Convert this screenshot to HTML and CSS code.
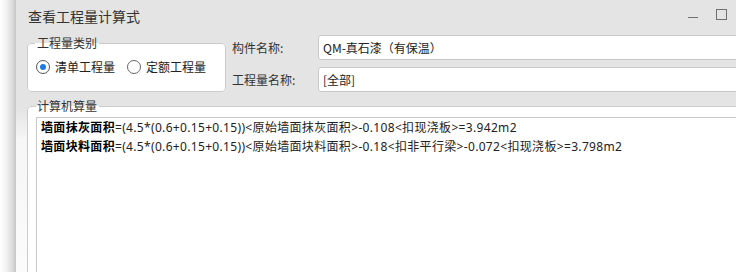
FILE: index.html
```html
<!DOCTYPE html>
<html lang="zh-CN">
<head>
<meta charset="utf-8">
<title>查看工程量计算式</title>
<link rel="stylesheet" href="styles.css">
</head>
<body>
<div class="page">
  <div class="shade"></div>
  <div class="dialog">
    <div class="titlebar">
      <span class="title">查看工程量计算式</span>
      <div class="winbtns">
        <svg class="btn-min" width="12" height="12" viewBox="0 0 12 12"><line x1="1" y1="8.5" x2="11" y2="8.5" stroke="#707070" stroke-width="1"/></svg>
        <svg class="btn-max" width="12" height="12" viewBox="0 0 12 12"><rect x="0.5" y="0.5" width="10" height="10" fill="none" stroke="#707070" stroke-width="1"/></svg>
      </div>
    </div>
    <div class="top">
      <fieldset class="group kind">
        <legend>工程量类别</legend>
        <div class="radios">
          <label class="radio"><span class="dot on"></span>清单工程量</label>
          <label class="radio"><span class="dot"></span>定额工程量</label>
        </div>
      </fieldset>
      <div class="fields">
        <div class="row"><span class="lbl">构件名称:</span><div class="input">QM-真石漆（有保温）</div></div>
        <div class="row"><span class="lbl">工程量名称:</span><div class="input">[全部]</div></div>
      </div>
    </div>
    <fieldset class="group calc">
      <legend>计算机算量</legend>
      <div class="textarea">
        <div class="line"><b>墙面抹灰面积</b>=(4.5*(0.6+0.15+0.15))&lt;原始墙面抹灰面积&gt;-0.108&lt;扣现浇板&gt;=3.942m2</div>
        <div class="line"><b>墙面块料面积</b>=(4.5*(0.6+0.15+0.15))&lt;原始墙面块料面积&gt;-0.18&lt;扣非平行梁&gt;-0.072&lt;扣现浇板&gt;=3.798m2</div>
      </div>
    </fieldset>
  </div>
</div>
</body>
</html>
```

FILE: styles.css
```css
html, body {
  margin: 0;
  padding: 0;
  background: #ffffff;
}
body {
  font-family: "Noto Sans CJK SC", "Noto Sans", sans-serif;
  font-size: 12px;
  color: #222;
  overflow: hidden;
}
.page {
  display: flex;
  width: 736px;
  height: 272px;
  overflow: hidden;
}
.shade {
  flex: 0 0 16px;
  background: linear-gradient(to right, #ffffff 0%, #f2f2f2 40%, #d6d6d6 85%, #c4c4c4 100%);
}
.dialog {
  flex: 0 0 720px;
  background: linear-gradient(to bottom, #e4e4e4 0, #e4e4e4 108px, #f6f6f6 140px, #fbfbfb 100%);
}
.titlebar {
  height: 35px;
  display: flex;
  align-items: center;
  padding-left: 12px;
  background: #e4e4e4;
  box-sizing: border-box;
}
.title {
  font-size: 14px;
  color: #333;
  line-height: 20px;
  margin-top: -4px;
}
.winbtns {
  margin-left: auto;
  margin-right: 8px;
  display: flex;
  gap: 17px;
  align-items: center;
  margin-top: -5px;
}
.top {
  display: flex;
  padding-left: 11px;
}
.group {
  margin: 0;
  border: 1px solid #cbcbcb;
  border-radius: 4px;
  background: #ffffff;
  padding: 0 7px;
}
.group legend {
  padding: 0 2px;
  font-size: 12px;
  line-height: 16px;
  color: #333;
}
.kind {
  flex: 0 0 199px;
  width: 199px;
  height: 57px;
  box-sizing: border-box;
}
.radios {
  display: flex;
  gap: 12px;
  padding-top: 8px;
  padding-left: 1px;
}
.radio {
  display: flex;
  align-items: center;
  line-height: 16px;
  color: #222;
  font-size: 12px;
}
.dot {
  width: 14px;
  height: 14px;
  box-sizing: border-box;
  border: 1px solid #666;
  border-radius: 50%;
  margin-right: 5px;
  display: flex;
  align-items: center;
  justify-content: center;
  background: #fff;
}
.dot.on {
  border-color: #555;
}
.dot.on::after {
  content: "";
  width: 6px;
  height: 6px;
  border-radius: 50%;
  background: #1e78e6;
}
.fields {
  display: flex;
  flex-direction: column;
  gap: 7px;
  margin-left: 6px;
  margin-right: -20px;
  flex: 1;
}
.row {
  display: flex;
  align-items: center;
}
.lbl {
  width: 86px;
  color: #333;
  flex: 0 0 86px;
}
.input {
  flex: 1;
  height: 25px;
  box-sizing: border-box;
  border: 1px solid #c8c8c8;
  border-radius: 3px;
  background: #fff;
  padding: 0 4px;
  line-height: 23px;
  color: #222;
  font-size: 12px;
}
.calc {
  margin: 6px -20px 0 11px;
  padding: 3px 0 0 8px;
  height: 300px;
}
.calc legend {
  padding: 0 2px 0 1px;
}
.textarea {
  border: 1px solid #c8c8c8;
  background: #fff;
  height: 400px;
  padding: 0 4px;
}
.line {
  font-family: "Noto Sans", "Noto Sans CJK SC", sans-serif;
  line-height: 19px;
  letter-spacing: 0.33px;
  white-space: nowrap;
  color: #222;
}
.line b {
  color: #000;
  font-weight: bold;
}
```
